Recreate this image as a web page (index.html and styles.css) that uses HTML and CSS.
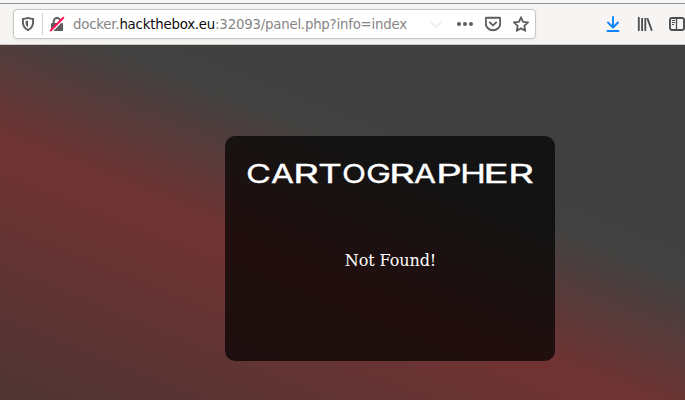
FILE: index.html
```
<!DOCTYPE html>
<html lang="en">
<head>
<meta charset="utf-8">
<title>Cartographer</title>
<link rel="stylesheet" href="styles.css">
</head>
<body>
<header class="toolbar">
  <div class="urlbar">
    <svg class="icon shield" viewBox="0 0 16 16"><path d="M8 1.900C9.800 2.500 11.600 2.800 13.100 2.900V6c0 4-1.600 6.500-5.100 8.200C4.500 12.500 2.900 10 2.900 6V2.900C4.400 2.800 6.200 2.500 8 1.900Z" fill="none" stroke="#5d5d5e" stroke-width="1.900" stroke-linejoin="round"/><path d="M8 4.600v7C6.200 10.300 5.500 8.600 5.500 5.200Z" fill="#5d5d5e"/></svg>
    <span class="divider"></span>
    <svg class="icon lock" viewBox="0 0 16 16"><path d="M4.700 8V5.300a3.300 3.300 0 0 1 6.600 0V8" fill="none" stroke="#5d5d5e" stroke-width="2"/><rect x="2" y="7" width="12" height="8" rx="1" fill="#5d5d5e"/><path d="M2.200 15.800 15 2.800" stroke="#fff" stroke-width="2"/><path d="M1.200 15 14.800 1.200" stroke="#ff1050" stroke-width="2"/></svg>
    <span class="url">docker.<b>hackthebox.eu</b>:32093/panel.php?info=index</span>
    <svg class="icon chevron" viewBox="0 0 16 16"><path d="m2.500 5.500 5.500 5.500 5.500-5.500" fill="none" stroke="#ececec" stroke-width="1.700"/></svg>
    <svg class="icon dots" viewBox="0 0 16 16" fill="#5d5d5e"><circle cx="2" cy="8" r="2"/><circle cx="8" cy="8" r="2"/><circle cx="14" cy="8" r="2"/></svg>
    <svg class="icon pocket" viewBox="0 0 16 16" fill="none" stroke="#5d5d5e" stroke-width="1.900" stroke-linecap="round" stroke-linejoin="round"><path d="M1.500 1.800h13q.7 0 .7.700V7.400a7.200 6.900 0 0 1-14.400 0V2.500Q.8 1.800 1.500 1.800Z"/><path d="m4.800 6.400 3.200 3 3.200-3"/></svg>
    <svg class="icon star" viewBox="0 0 16 16"><path d="m8 1.300 2 4.500 5.100.6-3.800 3.400 1 5L8 12.400l-4.300 2.400 1-5L.9 6.400 6 5.800Z" fill="none" stroke="#5d5d5e" stroke-width="1.800" stroke-linejoin="round"/></svg>
  </div>
  <div class="actions">
    <svg class="icon" viewBox="0 0 16 16" fill="none" stroke="#0a84ff" stroke-width="1.900" stroke-linecap="round" stroke-linejoin="round"><path d="M8 1v10M3 6.500l5 5 5-5M2.500 15h11"/></svg>
    <svg class="icon" viewBox="0 0 16 16" fill="none" stroke="#4b4e50" stroke-width="1.800"><path d="M1.800 1v14M5.100 2v13M8.300 2v13M10.300 2.100 14.900 14.700"/></svg>
    <svg class="icon" viewBox="0 0 16 16" fill="none" stroke="#4b4e50"><rect x="1" y="2" width="14" height="12" rx="2" stroke-width="1.900"/><path d="M7.500 2v12" stroke-width="1.300"/><path d="M3 4.500h3M3 6.500h3M3 8.500h2" stroke-width="1"/></svg>
  </div>
</header>
<main class="page">
  <section class="panel">
    <svg class="logo" viewBox="0 0 286 24" role="img" aria-label="CARTOGRAPHER"><text y="21"><tspan x="-1" textLength="25" lengthAdjust="spacingAndGlyphs">C</tspan><tspan x="24" textLength="23" lengthAdjust="spacingAndGlyphs">A</tspan><tspan x="46" textLength="26" lengthAdjust="spacingAndGlyphs">R</tspan><tspan x="71" textLength="24" lengthAdjust="spacingAndGlyphs">T</tspan><tspan x="95" textLength="24" lengthAdjust="spacingAndGlyphs">O</tspan><tspan x="119" textLength="25" lengthAdjust="spacingAndGlyphs">G</tspan><tspan x="142" textLength="26" lengthAdjust="spacingAndGlyphs">R</tspan><tspan x="167" textLength="22" lengthAdjust="spacingAndGlyphs">A</tspan><tspan x="189" textLength="26" lengthAdjust="spacingAndGlyphs">P</tspan><tspan x="213" textLength="26" lengthAdjust="spacingAndGlyphs">H</tspan><tspan x="236" textLength="26" lengthAdjust="spacingAndGlyphs">E</tspan><tspan x="261" textLength="26" lengthAdjust="spacingAndGlyphs">R</tspan></text></svg>
    <p class="message">Not Found!</p>
  </section>
</main>
</body>
</html>
```
FILE: styles.css
```
* { box-sizing: border-box; }
body {
  margin: 0;
  height: 400px;
  display: flex;
  flex-direction: column;
  overflow: hidden;
}
.toolbar {
  flex: none;
  display: flex;
  height: 45px;
  padding: 5px 0 0 13px;
  background: linear-gradient(#929292, #929292) 0 3px / 100% 1px no-repeat #f6f5f4;
  border-bottom: 1px solid #cbc7c3;
}
.urlbar {
  display: flex;
  align-items: center;
  width: 523px;
  height: 30px;
  margin-top: 4px;
  padding: 0 6px;
  background: #fff;
  border: 1px solid #c9c5c0;
  border-radius: 4px;
  box-shadow: 0 1px 3px rgba(0, 0, 0, 0.07);
}
.icon {
  display: block;
  flex: none;
  width: 16px;
  height: 16px;
}
.divider {
  width: 1px;
  height: 22px;
  margin: 0 6px;
  background: #cfcfcf;
}
.url {
  flex: none;
  width: 347px;
  margin-left: 8px;
  padding-top: 2px;
  font: 13.33px/20px "DejaVu Sans", sans-serif;
  letter-spacing: -0.215px;
  color: #858585;
  white-space: nowrap;
}
.url b { font-weight: 400; color: #0c0c0d; }
.chevron { margin-left: 8px; }
.dots { margin-left: 13px; }
.pocket, .star { margin-left: 12px; }
.actions {
  display: flex;
  align-items: center;
  gap: 16px;
  height: 30px;
  margin: 4px 0 0 69px;
}
.page {
  flex: 1;
  padding: 91px 0 0 225px;
  background: linear-gradient(22deg, #4f3434 0, #6f3333 218px, #703333 242px, #424241 368px, #404040 430px);
}
.panel {
  display: flex;
  flex-direction: column;
  align-items: center;
  width: 330px;
  height: 225px;
  padding-top: 26px;
  border-radius: 10px;
  background: rgba(0, 0, 0, 0.7);
  color: #fff;
}
.logo {
  width: 286px;
  height: 24px;
  overflow: visible;
}
.logo text {
  font: 400 25.5px "Inter", sans-serif;
  fill: #fff;
  stroke: #fff;
  stroke-width: 0.3px;
}
.message {
  margin: 65px 0 0 1px;
  font: 16px/20px "DejaVu Serif", serif;
  letter-spacing: -0.1px;
}
```
